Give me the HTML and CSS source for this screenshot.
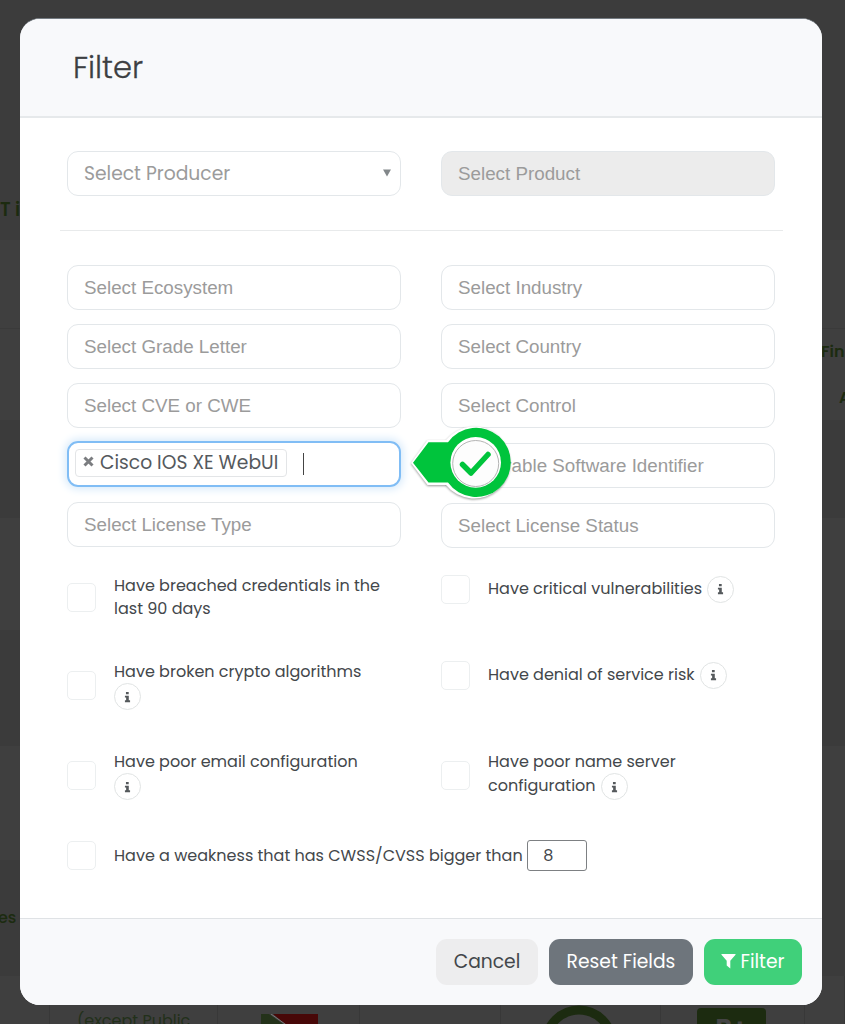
FILE: index.html
```
<!DOCTYPE html>
<html lang="en">
<head>
<meta charset="utf-8">
<title>Filter</title>
<link rel="stylesheet" href="styles.css">
</head>
<body>
<svg class="defs" width="0" height="0"><defs>
<symbol id="info" viewBox="0 0 8 14"><path d="M2.2 1.2h3.2v2.6H2.2zM1 5.5h4.5v5.3H7V13H1v-2.2h1.4V7.6H1z"/></symbol>
</defs></svg>
<div class="backdrop">
  <div class="band b1"><span class="edge e1">T i</span></div>
  <div class="band b2"></div>
  <div class="band b3"><span class="edge e2">Fin</span><span class="edge e3">A</span></div>
  <div class="band b4"></div>
  <div class="band b5"></div>
  <div class="band b6"></div>
  <div class="band b7"></div>
  <div class="band b8"><span class="edge e4">es</span></div>
  <div class="band b9">
    <div class="cell c1"></div>
    <div class="cell c2"><span>(except Public</span></div>
    <div class="cell c3"><svg width="57" height="20"><path fill="#480808" d="M12 0h45v20H36z"/><path fill="#24321a" d="M0 0h8l28 20H0z"/><path stroke="#777" fill="none" d="M10 0l28 20"/></svg></div>
    <div class="cell c4"></div>
    <div class="cell c5"><svg width="76" height="30"><circle cx="38" cy="38" r="33" fill="none" stroke="#1c2b10" stroke-width="9"/></svg></div>
    <div class="cell c6"><b class="grade">B+</b></div>
    <div class="cell"></div>
  </div>
</div>

<div class="modal">
  <header class="head"><h1>Filter</h1></header>
  <main class="body">
    <div class="cols">
      <div class="field producer"><span>Select Producer</span><svg width="8" height="8"><path d="M0 .5h8L4 7.500z" fill="#82878a"/></svg></div>
      <div class="field disabled"><span>Select Product</span></div>
    </div>
    <hr>
    <div class="cols selects">
      <div class="col left">
        <div class="field"><span>Select Ecosystem</span></div>
        <div class="field"><span>Select Grade Letter</span></div>
        <div class="field"><span>Select CVE or CWE</span></div>
        <div class="field focus"><div class="tag"><svg width="11" height="11"><path d="M1.500 1.500l8 8M9.500 1.500l-8 8" stroke="#7b7d80" stroke-width="3"/></svg><span>Cisco IOS XE WebUI</span></div><i class="caret"></i></div>
        <div class="field"><span>Select License Type</span></div>
      </div>
      <div class="col right">
        <div class="field"><span>Select Industry</span></div>
        <div class="field"><span>Select Country</span></div>
        <div class="field"><span>Select Control</span></div>
        <div class="field vulnerable"><span>Vulnerable Software Identifier</span></div>
        <div class="field status"><span>Select License Status</span></div>
      </div>
    </div>
    <div class="checks">
      <div class="check"><i class="box"></i><p>Have breached credentials in the<br>last 90 days</p></div>
      <div class="check"><i class="box"></i><p>Have critical vulnerabilities<b class="info"><svg><use href="#info"/></svg></b></p></div>
      <div class="check"><i class="box"></i><p>Have broken crypto algorithms<br><b class="info first"><svg><use href="#info"/></svg></b></p></div>
      <div class="check"><i class="box"></i><p>Have denial of service risk<b class="info"><svg><use href="#info"/></svg></b></p></div>
      <div class="check"><i class="box"></i><p>Have poor email configuration<br><b class="info first"><svg><use href="#info"/></svg></b></p></div>
      <div class="check"><i class="box"></i><p>Have poor name server<br>configuration<b class="info"><svg><use href="#info"/></svg></b></p></div>
      <div class="check wide"><i class="box"></i><p>Have a weakness that has CWSS/CVSS bigger than</p><div class="num">8</div></div>
    </div>
  </main>
  <footer class="foot">
    <button class="btn cancel"><span>Cancel</span></button>
    <button class="btn reset"><span>Reset Fields</span></button>
    <button class="btn go"><svg width="15" height="16"><path fill="#fff" d="M.8 1h13.400q.8 0 .3.800L9.300 7.800V15.500L5.700 12.500V7.800L.500 1.800Q0 1 .8 1z"/></svg><span>Filter</span></button>
  </footer>
</div>

<svg class="pointer" width="112" height="88" viewBox="0 0 112 88">
  <g class="shape"><path fill="#fff" d="M11 43L27.500 20H46A36 36 0 1 1 46 65H27.500z"/></g>
  <path fill="#00c43c" d="M13 42.700L28.500 22.300H48A34.600 34.600 0 1 1 48 62.500H28.500z"/>
  <circle cx="75.700" cy="42.400" r="25.300" fill="#fff"/>
  <circle cx="75.700" cy="43.500" r="23" fill="#fdfdfd" stroke="#b4b4b4"/>
  <path d="M62.500 44.500L71 53L88 34.500" fill="none" stroke="#00c43c" stroke-width="5.500" stroke-linecap="round" stroke-linejoin="round"/>
</svg>
</body>
</html>
```
FILE: styles.css
```
* { box-sizing: border-box; }
body { margin: 0; width: 845px; height: 1024px; overflow: hidden; position: relative; background: #3d3d3d; font-family: Poppins, Inter, sans-serif; color: #43474b; }
.defs { position: absolute; }
.backdrop { height: 1024px; display: flex; flex-direction: column; }
.band { background: #3f3f3f; position: relative; flex: none; overflow: hidden; }
.b1 { height: 240px; background: #3c3c3c; }
.b2 { height: 88px; }
.b3 { height: 92px; border-top: 1px solid #3a3a3a; }
.b4 { height: 98px; background: #3b3b3b; }
.b5 { height: 112px; }
.b6 { height: 116px; background: #3b3b3b; }
.b7 { height: 114px; }
.b8 { height: 116px; background: #3b3b3b; }
.b9 { height: 48px; display: flex; }
.edge { position: absolute; color: #1c2b10; font-size: 16px; font-weight: 600; line-height: 20px; white-space: nowrap; }
.e1 { left: 0; top: 200px; font-size: 18.5px; }
.e2 { left: 821px; top: 13px; }
.e3 { left: 839px; top: 59px; }
.e4 { left: -2px; top: 48px; font-weight: 500; }
.cell { flex: 1; border-right: 1px solid #383838; }
.c1 { flex: 0 0 50px; }
.c2 { flex: 0 0 168px; padding: 35px 0 0 27px; color: #22301a; font-size: 16px; line-height: 20px; white-space: nowrap; }
.c3 { flex: 0 0 142px; padding: 38px 0 0 43px; }
.c4 { flex: 0 0 141px; }
.c5 { flex: 0 0 160px; padding: 29px 0 0 40px; }
.c6 { flex: 0 0 144px; padding: 32px 0 0 36px; }
.grade { display: block; width: 69px; height: 30px; padding-top: 8px; border-radius: 4px; background: #1c2b10; color: #444; font-size: 25px; line-height: 24px; text-align: center; }

.modal { position: absolute; left: 20px; top: 18px; width: 802px; height: 987px; display: flex; flex-direction: column; background: #fff; border-radius: 20px; overflow: hidden; border-top: 1px solid #747b82; }
.head { height: 99px; background: #f8f9fb; border-bottom: 2px solid #e6e9eb; padding: 27px 0 0 53px; }
h1 { margin: 0; font-size: 30.6px; font-weight: 300; line-height: 43px; color: #3c3f42; -webkit-text-stroke: .3px #3c3f42; }
.body { flex: 1; padding: 33px 47px 0; }
.cols { display: grid; grid-template-columns: 334px 334px; column-gap: 40px; }
.field { height: 45px; border: 1.500px solid #e3e7ea; border-radius: 11px; padding: 0 16px; display: flex; align-items: center; font: 18.800px "Liberation Sans", Arial, sans-serif; color: #9b9b9b; white-space: nowrap; }
.producer { font-family: Poppins, Inter, sans-serif; font-size: 18.72px; justify-content: space-between; padding-right: 9px; }
.producer svg { margin-top: -2px; }
.disabled { background: #ececec; }
hr { width: 723px; margin: 34px 0 34px -7px; border: 0; border-top: 1px solid #e8eaeb; }
.col { display: flex; flex-direction: column; gap: 14px; }
.focus { border: 2px solid #80bdf5; box-shadow: 0 0 8px 2px #d5e9fa; padding: 0 6px; height: 46px; margin-top: -1px; }
.left .field:last-child { margin-top: 1px; }
.vulnerable { margin-top: 1px; }
.status { margin-top: 1px; }
.tag { height: 28px; width: 212px; margin-top: -3px; border: 1px solid #e3e5e7; border-radius: 4px; display: flex; align-items: center; gap: 6px; padding: 0 7px; color: #55595d; font: 18.7px Poppins, Inter, sans-serif; }
.tag svg, .tag span { flex: none; }
.tag svg { margin-top: -3px; }
.caret { width: 1px; height: 22px; background: #444; margin-left: 16px; }
.checks { display: grid; grid-template-columns: 334px 334px; grid-template-rows: 86px 90px 90px 31px; column-gap: 40px; margin-top: 26px; align-items: start; font-size: 16.03px; }
.check { display: flex; align-items: center; min-height: 30px; }
.box { flex: none; width: 29px; height: 29px; border: 1px solid #eceff0; border-radius: 5px; margin-right: 18px; }
p { margin: 0; line-height: 23px; white-space: nowrap; }
.info { display: inline-flex; width: 27px; height: 27px; border: 1.500px solid #e1e4e4; border-radius: 50%; margin-left: 5px; vertical-align: middle; align-items: center; justify-content: center; fill: #55595c; }
.first { margin-left: 0; }
.info svg { width: 7px; height: 12px; }
.wide { grid-column: 1 / 3; }
.num { width: 60px; height: 31px; margin-left: 4.500px; border: 1px solid #7d8083; border-radius: 3px; padding: 0 15px; line-height: 29px; }
.foot { height: 87px; border-top: 1px solid #dfe2e5; background: #f8f9fb; display: flex; justify-content: flex-end; gap: 11px; padding: 20px 20px 0 0; }
.btn { height: 46px; border: 0; border-radius: 11px; padding: 0 0 2px; display: flex; align-items: center; justify-content: center; gap: 4px; font: 18.700px Poppins, Inter, sans-serif; color: #fff; white-space: nowrap; }
.cancel { width: 102px; background: #ededee; color: #43474b; }
.reset { width: 144px; background: #6e757c; }
.go { width: 98px; background: #40d07a; }
.pointer { position: absolute; left: 400px; top: 420px; }
.shape { filter: drop-shadow(0 1px 1px rgba(0, 0, 0, .4)); }
```
